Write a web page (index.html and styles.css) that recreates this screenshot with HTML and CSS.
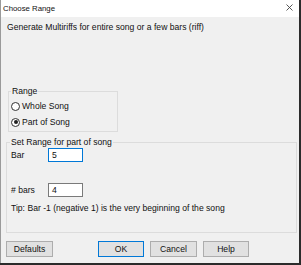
FILE: index.html
```html
<!DOCTYPE html>
<html lang="en">
<head>
    <meta charset="UTF-8">
    <title>Choose Range</title>
    <link rel="stylesheet" href="styles.css">
</head>
<body>

<div class="dialog">
    <div class="titlebar">
        <span class="title">Choose Range</span>
        <svg class="close" width="7" height="7" viewBox="0 0 7 7">
            <path d="M0.5 0.5 L6.5 6.5 M6.5 0.5 L0.5 6.5" stroke="#444" stroke-width="0.9" fill="none"/>
        </svg>
    </div>

    <div class="content">
        <p class="intro">Generate Multiriffs for entire song or a few bars (riff)</p>

        <fieldset class="group range-group">
            <legend>Range</legend>
            <label class="radio"><span class="circle"></span>Whole Song</label>
            <label class="radio"><span class="circle checked"></span>Part of Song</label>
        </fieldset>

        <fieldset class="group set-group">
            <legend>Set Range for part of song</legend>
            <div class="field-row">
                <span class="field-label">Bar</span>
                <span class="textbox focused">5</span>
            </div>
            <div class="field-row bars-row">
                <span class="field-label"># bars</span>
                <span class="textbox">4</span>
            </div>
            <p class="tip">Tip: Bar -1 (negative 1) is the very beginning of the song</p>
        </fieldset>

        <div class="buttons">
            <button class="btn btn-defaults">Defaults</button>
            <button class="btn btn-ok">OK</button>
            <button class="btn btn-cancel">Cancel</button>
            <button class="btn btn-help">Help</button>
        </div>
    </div>
</div>

</body>
</html>
```

FILE: styles.css
```css
body {
    margin: 0;
    background: #2b2b2b;
    font-family: "Liberation Sans", Arial, sans-serif;
    font-size: 8.6px;
    color: #111;
}

.dialog {
    width: 298px;
    height: 263px;
    background: #f0f0f0;
    border-left: 1px solid #9a9a9a;
    overflow: hidden;
}

.titlebar {
    height: 17px;
    background: #fff;
    display: flex;
    align-items: center;
    justify-content: space-between;
    padding: 0 6px 1px 2px;
    box-sizing: border-box;
}

.title {
    font-size: 7.8px;
    color: #111;
}

.close {
    display: block;
    margin-top: -2px;
}

.content {
    padding-top: 5px;
}

.intro {
    margin: 0 0 0 6px;
    line-height: 10px;
}

.group {
    margin: 0;
    padding: 0;
    border: 1px solid #dcdcdc;
    box-sizing: border-box;
}

.group legend {
    padding: 0 1px;
    line-height: 10px;
}

.range-group {
    margin: 54px 0 0 7px;
    width: 110px;
    height: 46px;
    padding: 0 2px;
}

.radio {
    display: flex;
    align-items: center;
    height: 10px;
    margin-top: 5px;
}

.radio + .radio {
    margin-top: 6px;
}

.circle {
    width: 9px;
    height: 9px;
    border: 1px solid #333;
    border-radius: 50%;
    background: #fff;
    box-sizing: border-box;
    margin-right: 2px;
    position: relative;
}

.circle.checked::after {
    content: "";
    position: absolute;
    left: 1.5px;
    top: 1.5px;
    width: 4px;
    height: 4px;
    border-radius: 50%;
    background: #222;
}

.set-group {
    margin: 5px 0 0 5px;
    width: 291px;
    height: 96px;
    padding: 0 4px;
}

.set-group legend {
    margin-left: -1px;
}

.field-row {
    display: flex;
    align-items: center;
    height: 14px;
    margin-top: 1px;
}

.bars-row {
    margin-top: 21px;
}

.field-label {
    width: 37px;
}

.textbox {
    width: 35px;
    height: 14px;
    box-sizing: border-box;
    background: #fff;
    border: 1px solid #7a7a7a;
    padding-left: 3px;
    line-height: 12px;
}

.textbox.focused {
    border-color: #0078d7;
}

.tip {
    margin: 6px 0 0 0;
    line-height: 10px;
}

.buttons {
    display: flex;
    margin: 8px 0 0 5px;
}

.btn {
    font-family: inherit;
    font-size: 8.6px;
    height: 16px;
    width: 46px;
    padding: 0;
    background: #e1e1e1;
    border: 1px solid #adadad;
    color: #111;
}

.btn-defaults {
    width: 47px;
}

.btn-ok {
    margin-left: 45px;
    border-color: #0078d7;
}

.btn-cancel {
    margin-left: 6px;
    width: 47px;
}

.btn-help {
    margin-left: 6px;
}
```
